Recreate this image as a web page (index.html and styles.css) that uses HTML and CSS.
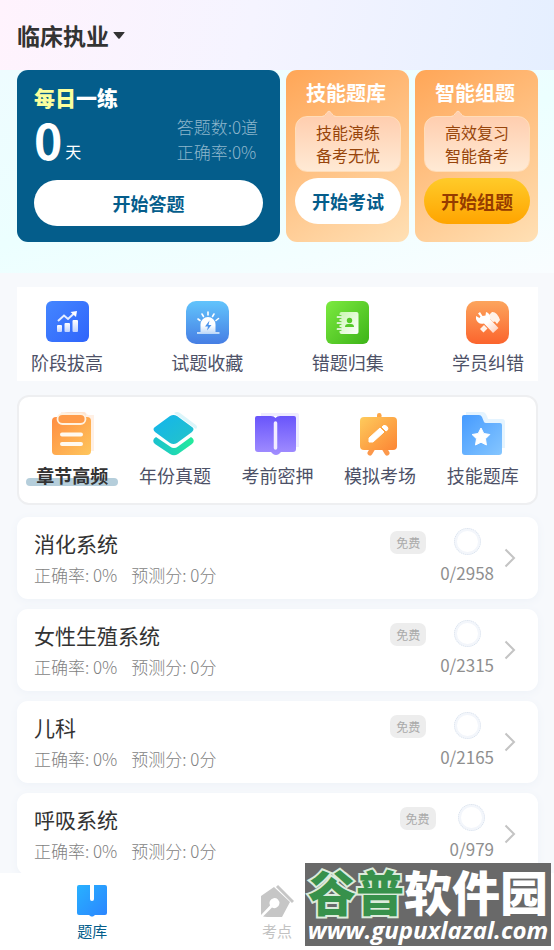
FILE: index.html
```html
<!DOCTYPE html>
<html lang="zh-CN">
<head>
<meta charset="utf-8">
<meta name="viewport" content="width=device-width, initial-scale=1">
<title>临床执业</title>
<link rel="stylesheet" href="styles.css">
</head>
<body>
<div class="app">
  <main class="content">
    <header class="topbar">
      <button class="subject" type="button">临床执业<svg class="caret" viewBox="0 0 12 7" aria-hidden="true"><path d="M1 0h10q1 0 .4.8L6.700 6.500q-.7.700-1.400 0L.6.800Q0 0 1 0z" fill="#333"/></svg></button>
    </header>
    <section class="hero">
      <article class="daily">
        <h2 class="daily-title"><span class="accent">每日</span>一练</h2>
        <div class="daily-row">
          <p class="days"><strong>0</strong><span>天</span></p>
          <p class="stats">答题数:0道<br>正确率:0%</p>
        </div>
        <button class="pill" type="button">开始答题</button>
      </article>
      <article class="promo">
        <h2 class="promo-title">技能题库</h2>
        <p class="bubble"><svg class="tip" viewBox="0 0 14 8" aria-hidden="true"><path d="M0 7Q3 7 5 2.500Q7-.5 9 2.500Q11 7 14 7V8H0z" fill="#ffcfaf"/><path d="M0 6.500Q3 6.500 5 2.500Q7-.5 9 2.500Q11 6.500 14 6.500" fill="none" stroke="#ffddc0"/></svg>技能演练<br>备考无忧</p>
        <button class="pill" type="button">开始考试</button>
      </article>
      <article class="promo">
        <h2 class="promo-title">智能组题</h2>
        <p class="bubble"><svg class="tip" viewBox="0 0 14 8" aria-hidden="true"><path d="M0 7Q3 7 5 2.500Q7-.5 9 2.500Q11 7 14 7V8H0z" fill="#ffcfaf"/><path d="M0 6.500Q3 6.500 5 2.500Q7-.5 9 2.500Q11 6.500 14 6.500" fill="none" stroke="#ffddc0"/></svg>高效复习<br>智能备考</p>
        <button class="pill pill-gold" type="button">开始组题</button>
      </article>
    </section>

    <nav class="services" aria-label="学习工具">
      <a class="service" href="#"><svg viewBox="0 0 43 43" aria-hidden="true">
        <defs><linearGradient id="s1" x1="0" y1="0" x2="1" y2="1"><stop stop-color="#4486ff"/><stop offset="1" stop-color="#2f64fb"/></linearGradient><linearGradient id="w1" x1="0" y1="0" x2="0" y2="1"><stop stop-color="#fff"/><stop offset="1" stop-color="#bfd2ff"/></linearGradient></defs>
        <rect width="43" height="41" rx="6" fill="url(#s1)"/>
        <rect x="11" y="24" width="5" height="7" rx="1" fill="url(#w1)"/><rect x="18.500" y="22" width="5.500" height="9" rx="1" fill="url(#w1)"/><rect x="26.500" y="19" width="5.500" height="12" rx="1" fill="url(#w1)"/>
        <path d="M12 20l6-5.500 4 3.500 6-5.500" fill="none" stroke="#e4edff" stroke-width="2"/><path d="M24.500 11l6.500-1-1 6z" fill="#fff"/></svg>阶段拔高</a>
      <a class="service" href="#"><svg viewBox="0 0 43 43" aria-hidden="true">
        <defs><linearGradient id="s2" x1="0" y1="0" x2="0" y2="1"><stop stop-color="#62c4fc"/><stop offset="1" stop-color="#467ee4"/></linearGradient><linearGradient id="w2" x1="0" y1="0" x2="0" y2="1"><stop offset=".5" stop-color="#fff"/><stop offset="1" stop-color="#b9d6f8"/></linearGradient></defs>
        <rect width="43" height="43" rx="10" fill="url(#s2)"/>
        <path d="M14.500 31v-7.500a7.500 7.500 0 0 1 15 0V31h4v2h-22.500v-2z" fill="url(#w2)"/><path d="M23.500 19.500l-4.500 6h3l-1 4 4.500-5.500h-3z" fill="#4c94ec"/>
        <path d="M12 18l2 1.500M16 13l1.500 2.500M22 11v3M28 13L26.500 15.500M32.500 17.500L30 19.500" stroke="#fff" stroke-width="1.600" stroke-linecap="round"/></svg>试题收藏</a>
      <a class="service" href="#"><svg viewBox="0 0 43 43" aria-hidden="true">
        <defs><linearGradient id="s3" x1="0" y1="0" x2="1" y2="1"><stop stop-color="#7cea40"/><stop offset="1" stop-color="#3db418"/></linearGradient><linearGradient id="w3" x1="0" y1="0" x2="1" y2="1"><stop stop-color="#c9f7b0"/><stop offset="1" stop-color="#fff"/></linearGradient></defs>
        <rect width="43" height="43" rx="6" fill="url(#s3)"/>
        <rect x="13.500" y="11" width="19" height="22" rx="2" fill="url(#w3)"/>
        <g fill="#55ca28"><circle cx="14" cy="16" r="2"/><circle cx="14" cy="22" r="2"/><circle cx="14" cy="28" r="2"/><circle cx="23.500" cy="19.500" r="2.700"/><path d="M19 26q0-3 3-3h3q3 0 3 3z"/></g>
        <path d="M11.500 16h4M11.500 22h4M11.500 28h4" stroke="#fff" stroke-width="1.700" stroke-linecap="round"/></svg>错题归集</a>
      <a class="service" href="#"><svg viewBox="0 0 43 43" aria-hidden="true">
        <defs><linearGradient id="s4" x1="0" y1="0" x2="0" y2="1"><stop stop-color="#fca55d"/><stop offset="1" stop-color="#fb642d"/></linearGradient><linearGradient id="w4" x1="0" y1="0" x2="1" y2="1"><stop offset=".5" stop-color="#fff"/><stop offset="1" stop-color="#ffc7b0"/></linearGradient></defs>
        <rect width="43" height="43" rx="10" fill="url(#s4)"/>
        <path d="M14 28l4-4 3.500 3.500-4 4zM23 14l3-3q5-.5 8 8l-3 4-2-2.500-2 .5-4-4z" fill="#fff2e9"/>
        <path d="M14 11l2.500 4 3-.5.500-3.500q4 1 4 5.500v1.500L32.500 27 27 32l-9-9.500q-6 1.500-8-4.500V15l3.500 2 1-1.500-2.500-3z" fill="url(#w4)"/></svg>学员纠错</a>
    </nav>

    <nav class="categories" aria-label="题库分类">
      <a class="category active" href="#"><svg viewBox="0 0 46 44" aria-hidden="true">
        <defs><linearGradient id="c1" x1="0" y1="0" x2="1" y2="1"><stop stop-color="#ff8d42"/><stop offset="1" stop-color="#fec65c"/></linearGradient></defs>
        <path d="M12 0h24l3 3h6v36h-6V5H12z" fill="#fff0e5"/><path d="M14 2q2-2 5-2h15q3 0 3 3v3H14z" fill="#ffe4d0"/>
        <rect x="3" y="5" width="39" height="38" rx="4" fill="url(#c1)"/><rect x="8.500" y="2" width="28" height="10" rx="5" fill="#ff9b49" stroke="#fff1df" stroke-width="1.800"/>
        <path d="M13 22.500h19M13 32h19" stroke="#fff9f0" stroke-width="4" stroke-linecap="round"/></svg><span>章节高频</span></a>
      <a class="category" href="#"><svg viewBox="0 0 46 44" aria-hidden="true">
        <defs><linearGradient id="c2" x1="0" y1="0" x2="1" y2="1"><stop stop-color="#13b4ee"/><stop offset="1" stop-color="#24c4c7"/></linearGradient><linearGradient id="c2b"><stop stop-color="#1ac1cf"/><stop offset="1" stop-color="#24eb9b"/></linearGradient></defs>
        <path d="M22 1q3-2 6 0l16 12q2 2 0 4z" fill="#dcf5fa"/>
        <path d="M4 25q-5 3-1 7l15 10q4 2.500 8 0l14-10q4-4-1-7L26 34.500q-4 3-8 0z" fill="url(#c2b)"/>
        <path d="M18 4q3.500-2 7 0l15 11q3 2 0 5L25 31q-3.500 2-7 0L3 20q-3-3 0-5z" fill="url(#c2)"/></svg><span>年份真题</span></a>
      <a class="category" href="#"><svg viewBox="0 0 46 44" aria-hidden="true">
        <defs><linearGradient id="c3" x1="0" y1="0" x2="0" y2="1"><stop stop-color="#6955fb"/><stop offset="1" stop-color="#a28eff"/></linearGradient></defs>
        <path d="M7 1h36q2 0 2 2v32h-5V4H7z" fill="#eeebff"/>
        <path d="M3 4h14q3 0 4.500 2Q23 4 26 4h14q2 0 2 2v31q0 3-3 3H27l-2 2q-3 2-6 0l-2-2H4q-3 0-3-3V6q0-2 2-2z" fill="url(#c3)"/><path d="M21.500 11v25" stroke="#f2edff" stroke-width="3.500" stroke-linecap="round"/></svg><span>考前密押</span></a>
      <a class="category" href="#"><svg viewBox="0 0 46 44" aria-hidden="true">
        <defs><linearGradient id="c4" x1="0" y1="0" x2="1" y2="1"><stop stop-color="#fecb5c"/><stop offset="1" stop-color="#fc8534"/></linearGradient></defs>
        <path d="M16 36l-3 5M27 36l3 5" stroke="#fc984b" stroke-width="5" stroke-linecap="round"/><rect x="20" y="1" width="4.500" height="9" rx="2.200" fill="#fea747"/><rect x="3" y="5" width="37" height="33" rx="4" fill="url(#c4)"/>
        <path d="M12 30v-4l11-10 4 4-11 10zM25 15l1.500-1.500q2-.5 3.500 1t.5 3.500L29 19z" fill="#fff" stroke="#fff" stroke-width="1" stroke-linejoin="round"/></svg><span>模拟考场</span></a>
      <a class="category" href="#"><svg viewBox="0 0 46 44" aria-hidden="true">
        <defs><linearGradient id="c5" x1="0" y1="0" x2="1" y2="1"><stop stop-color="#469bff"/><stop offset="1" stop-color="#85c6ff"/></linearGradient></defs>
        <path d="M6 0h17q3 0 5 7h14q3 0 3 3v26h-6L6 5z" fill="#e5f4ff"/>
        <path d="M4 3h15q2 0 3 2l2 5q.5 1 2 1h14q2 0 2 2v27q0 3-3 3H5q-3 0-3-3V5q0-2 2-2z" fill="url(#c5)"/>
        <path d="M21 16l2.800 5.500 6 1-4.300 4.300.9 6.200-5.400-2.800-5.500 2.800 1-6.200-4.400-4.300 6.100-1z" fill="#fff" stroke="#fff" stroke-linejoin="round"/></svg><span>技能题库</span></a>
    </nav>

    <section class="chapters" aria-label="章节列表">
      <a class="chapter" href="#">
        <div class="info"><h3>消化系统</h3><p><span>正确率: 0%</span><span>预测分: 0分</span></p></div>
        <span class="badge">免费</span>
        <div class="progress"><i class="ring"></i><span>0/2958</span></div>
        <svg class="chevron" viewBox="0 0 12 20" aria-hidden="true"><path d="M1.500 1.500L10 10l-8.500 8.500"/></svg>
      </a>
      <a class="chapter" href="#">
        <div class="info"><h3>女性生殖系统</h3><p><span>正确率: 0%</span><span>预测分: 0分</span></p></div>
        <span class="badge">免费</span>
        <div class="progress"><i class="ring"></i><span>0/2315</span></div>
        <svg class="chevron" viewBox="0 0 12 20" aria-hidden="true"><path d="M1.500 1.500L10 10l-8.500 8.500"/></svg>
      </a>
      <a class="chapter" href="#">
        <div class="info"><h3>儿科</h3><p><span>正确率: 0%</span><span>预测分: 0分</span></p></div>
        <span class="badge">免费</span>
        <div class="progress"><i class="ring"></i><span>0/2165</span></div>
        <svg class="chevron" viewBox="0 0 12 20" aria-hidden="true"><path d="M1.500 1.500L10 10l-8.500 8.500"/></svg>
      </a>
      <a class="chapter" href="#">
        <div class="info"><h3>呼吸系统</h3><p><span>正确率: 0%</span><span>预测分: 0分</span></p></div>
        <span class="badge">免费</span>
        <div class="progress"><i class="ring"></i><span>0/979</span></div>
        <svg class="chevron" viewBox="0 0 12 20" aria-hidden="true"><path d="M1.500 1.500L10 10l-8.500 8.500"/></svg>
      </a>
    </section>
  </main>

  <nav class="tabbar" aria-label="主导航">
    <a class="tab current" href="#"><svg viewBox="0 0 34 34" aria-hidden="true">
      <defs><linearGradient id="t1" x1="0" y1="0" x2="1" y2="1"><stop stop-color="#28b1ff"/><stop offset="1" stop-color="#2b85ff"/></linearGradient></defs>
      <path d="M4 2h11v14q0 2 2 2t2-2V2h11q2 0 2 2v26q0 2-2 2H20l-2 1.500h-2L14 32H4q-2 0-2-2V4q0-2 2-2z" fill="url(#t1)"/></svg>题库</a>
    <a class="tab" href="#"><svg viewBox="0 0 34 34" aria-hidden="true">
      <path d="M1 13L14 4l16 15-8 15H7l-4-.5 9-9a5 5 0 1 0-2-2L1 32z" fill="#c6c6c6"/><path d="M17 3l16 16" stroke="#c6c6c6" stroke-width="3"/></svg>考点</a>
  </nav>

  <aside class="watermark">
    <p class="mark-name"><span>谷普</span>软件园</p>
    <p class="mark-url">www.gupuxlazal.com</p>
  </aside>
</div>
</body>
</html>
```
FILE: styles.css
```css
* { box-sizing: border-box; }
body, h2, h3, p { margin: 0; }
body {
  font-family: "Noto Sans CJK SC", sans-serif;
  color: #333;
  background: #f7f9fc;
}
a { color: inherit; text-decoration: none; }
button { border: 0; padding: 0; background: none; color: inherit; font: inherit; cursor: pointer; }
svg { display: block; }

.app { position: relative; display: flex; flex-direction: column; height: 100vh; overflow: hidden; }
.content { flex: 1; min-height: 0; overflow: hidden; }

.topbar {
  display: flex;
  align-items: center;
  height: 70px;
  padding: 0 17px;
  background: linear-gradient(100deg, #fff3fd 0%, #f5f4ff 45%, #e5efff 100%);
}
.subject { display: flex; align-items: center; gap: 4px; font-size: 23px; line-height: 32px; font-weight: 700; }
.caret { width: 12px; height: 7px; }

.hero {
  display: grid;
  grid-template-columns: 263fr 123fr 123fr;
  gap: 6px;
  padding: 0 16px 31px 17px;
  background: linear-gradient(165deg, #eefcff 0%, #ecffff 50%, #f9fdff 100%);
}
.daily, .promo { display: flex; flex-direction: column; border-radius: 11px; }
.daily { padding: 13px 17px 16px; background: #045d8b; color: #fff; }
.daily-title { font-size: 21px; line-height: 28px; font-weight: 900; }
.accent { color: #faff9e; }
.daily-row { display: flex; justify-content: space-between; height: 50px; margin: 3px 0 16px; padding-right: 5px; }
.days { display: flex; align-items: flex-end; gap: 3px; font-size: 16px; line-height: 26px; }
.days strong { font: 700 48px/50px "Liberation Sans Narrow", "Noto Sans CJK SC", sans-serif; }
.stats { font-size: 17px; line-height: 25px; font-weight: 300; color: #8db6cc; }
.pill {
  width: 100%;
  height: 46px;
  border-radius: 23px;
  background: #fff;
  color: #045d8b;
  font-size: 18px;
  font-weight: 700;
}
.pill-gold { background: linear-gradient(#ffcb29, #ffa400); color: #963c00; }

.promo { padding: 9px 8px 18px 9px; background: linear-gradient(150deg, #ffa657, #ffe0b5); }
.promo-title { padding-right: 4px; font-size: 20px; line-height: 28px; font-weight: 700; color: #fff; text-align: center; }
.bubble {
  position: relative;
  margin: 9px 0 6px;
  padding: 4px 0;
  border: 1px solid #ffddb9;
  border-radius: 12px;
  background: linear-gradient(#ffceaf, #ffead5);
  color: #97450b;
  font-size: 16px;
  line-height: 23px;
  text-align: center;
}
.tip { position: absolute; left: 26px; top: -7px; width: 14px; height: 8px; }

.services {
  display: flex;
  justify-content: space-between;
  margin: 14px 16px 14px 17px;
  padding: 14px 14px 6px;
  background: #fff;
}
.service, .category { display: flex; flex-direction: column; align-items: center; color: #4d5167; font-size: 18px; line-height: 26px; }
.service { gap: 5px; }
.service svg { width: 43px; height: 43px; }

.categories {
  display: grid;
  grid-template-columns: repeat(5, 1fr);
  margin: 0 16px 12px 17px;
  padding: 15px 2px;
  border: 2px solid #eeeff1;
  border-radius: 12px;
  background: #fff;
}
.category { gap: 6px; }
.category svg { width: 46px; height: 44px; }
.category span { padding: 0 10px; }
.active { color: #333; font-weight: 700; }
.category.active span { position: relative; z-index: 0; }
.active span::before {
  content: "";
  position: absolute;
  z-index: -1;
  left: 0;
  right: 0;
  bottom: 2px;
  height: 8px;
  border-radius: 4px;
  background: #b5cedb;
}

.chapters { display: grid; gap: 10px; padding: 0 16px 0 17px; }
.chapter {
  display: flex;
  align-items: flex-start;
  height: 82px;
  padding: 11px 22px 0 17px;
  border-radius: 11px;
  background: #fff;
  box-shadow: 0 2px 8px #eef2f8;
}
.info { flex: 1; }
.info h3 { font-size: 21px; line-height: 30px; font-weight: 400; }
.info p { display: flex; gap: 14px; margin-top: 5px; font-size: 17px; line-height: 24px; font-weight: 300; color: #7f7f7f; }
.badge {
  margin: 3px 14px 0 0;
  padding: 0 6px;
  border-radius: 7px;
  background: #ededed;
  color: #aaa;
  font-size: 12px;
  line-height: 23px;
}
.progress { display: flex; flex-direction: column; align-items: center; gap: 6px; color: #8f8f8f; font-size: 17px; line-height: 24px; }
.ring { width: 27px; height: 27px; border: 3px solid #f3f6fb; border-radius: 50%; outline: 1px dotted #d9e2ed; outline-offset: -1px; }
.chevron { width: 12px; height: 20px; margin: 20px 0 0 10px; fill: none; stroke: #c4c4c4; stroke-width: 2; }

.tabbar { display: grid; grid-template-columns: repeat(3, 1fr); height: 77px; padding-top: 10px; background: #fff; }
.tab { display: flex; flex-direction: column; align-items: center; gap: 2px; color: #c2c2c2; font-size: 15px; line-height: 24px; }
.tab svg { width: 34px; height: 34px; }
.current { color: #045d8b; }

.watermark {
  position: absolute;
  right: 3px;
  bottom: 4px;
  padding-bottom: 3px;
  background: #696969;
  color: #fff;
  text-align: center;
}
.mark-name { font-size: 48px; line-height: 54px; font-weight: 900; padding: 0 3px; }
.mark-name span { color: #37914b; -webkit-text-stroke: 4px #dcebdc; paint-order: stroke fill; }
.mark-url { font: italic 700 24px/26px "Open Sans", sans-serif; }
```
